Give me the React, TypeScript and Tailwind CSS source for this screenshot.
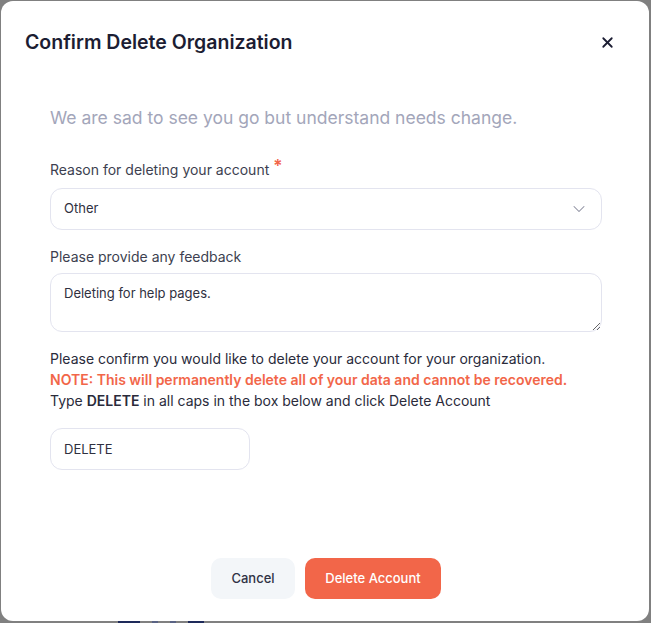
import { X, ChevronDown } from "lucide-react"

export default function App() {
  return (
    <div className="relative h-[623px] w-[651px] overflow-hidden bg-[#808080] font-['Inter',sans-serif]">
      {/* page content peeking under the modal */}
      <div className="absolute bottom-0 left-[118px] flex h-[2px] gap-[12px]">
        <div className="w-[22px] bg-[#1e2a5a]" />
        <div className="w-[6px] bg-[#5a6384]" />
        <div className="w-[6px] bg-[#5a6384]" />
        <div className="w-[16px] bg-[#1e2a5a]" />
      </div>

      <div className="relative ml-px mt-px flex h-[620px] w-[648px] flex-col rounded-[12px] bg-white">
        <div className="flex items-center justify-between px-6 pt-[27px]">
          <h2 className="text-[19.5px] font-semibold text-[#1c1d33]">Confirm Delete Organization</h2>
          <button className="mr-[9px] text-[#1c1d33]">
            <X size={17} strokeWidth={2.5} />
          </button>
        </div>

        <div className="px-[49px] pt-[48px]">
          <p className="text-[17.5px] text-[#a3a6ba]">We are sad to see you go but understand needs change.</p>

          <label className="mt-[27px] block text-[14px] text-[#3d3f50]">
            Reason for deleting your account <span className="relative -top-[3px] text-[17px] leading-none font-semibold text-[#f26649]">*</span>
          </label>
          <div className="mt-[8px] flex h-[42px] w-[552px] items-center justify-between rounded-[12px] border border-[#e3e4ef] pl-[13px] pr-[12px] text-[13px] text-[#2f3040]">
            <span>Other</span>
            <ChevronDown size={20} strokeWidth={1.25} className="text-[#8a8c9e]" />
          </div>

          <label className="mt-[16px] block text-[14px] text-[#3d3f50]">Please provide any feedback</label>
          <textarea
            className="mt-[6px] block h-[59px] w-[552px] resize-y rounded-[12px] border border-[#e3e4ef] px-[13px] py-[10px] text-[13px] text-[#2f3040] outline-none"
            defaultValue="Deleting for help pages."
          />

          <div className="mt-[16px] text-[14px] leading-[21px] text-[#2a2b3b]">
            <p>Please confirm you would like to delete your account for your organization.</p>
            <p className="font-semibold text-[#f26649]">NOTE: This will permanently delete all of your data and cannot be recovered.</p>
            <p>
              Type <span className="font-semibold">DELETE</span> in all caps in the box below and click Delete Account
            </p>
          </div>

          <input
            className="mt-[17px] block h-[42px] w-[200px] rounded-[12px] border border-[#e3e4ef] px-[13px] text-[13px] text-[#2f3040] outline-none"
            defaultValue="DELETE"
          />
        </div>

        <div className="mt-auto mb-[22px] flex justify-center gap-[10px] pl-[2px]">
          <button className="h-[41px] w-[84px] rounded-[10px] bg-[#f3f6f9] text-[13px] font-medium text-[#2f3245]">Cancel</button>
          <button className="h-[41px] w-[136px] rounded-[10px] bg-[#f26649] text-[13px] font-medium text-white">Delete Account</button>
        </div>
      </div>
    </div>
  )
}
